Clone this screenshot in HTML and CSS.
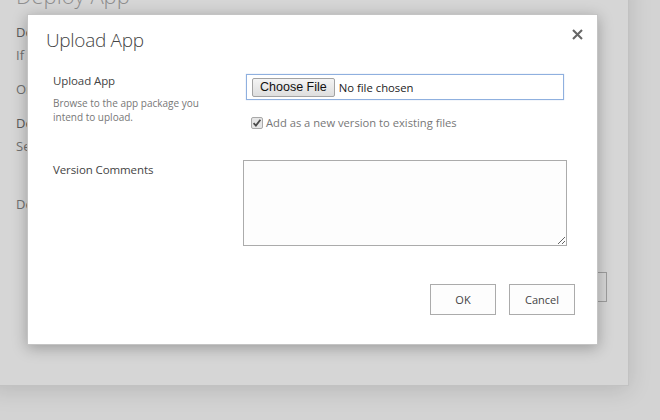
FILE: index.html
```html
<!DOCTYPE html>
<html>
<head>
<meta charset="utf-8">
<link rel="stylesheet" href="styles.css">
</head>
<body>
<div class="back-panel">
  <h1 class="back-title">Deploy App</h1>
  <p class="back-line strong">Deploy to site</p>
  <p class="back-line">If you want to deploy the app</p>
  <p class="back-line gap1">Or select an existing app</p>
  <p class="back-line strong gap2">Deployment package</p>
  <p class="back-line">Select a package file</p>
  <p class="back-line gap3">Deployment status</p>
  <div class="back-actions"><span class="back-btn"></span></div>
</div>

<div class="dialog" role="dialog" aria-label="Upload App">
  <div class="dialog-head">
    <h2 class="dialog-title">Upload App</h2>
    <button class="close" aria-label="Close">
      <svg width="11" height="11" viewBox="0 0 11 11"><path d="M1 1 L10 10 M10 1 L1 10" stroke="#666" stroke-width="2.1" fill="none"/></svg>
    </button>
  </div>
  <div class="form">
    <div class="label-col">
      <div class="label">Upload App</div>
      <div class="desc">Browse to the app package you intend to upload.</div>
    </div>
    <div class="field-col">
      <div class="file-box">
        <span class="choose">Choose File</span>
        <span class="no-file">No file chosen</span>
      </div>
      <div class="check-row">
        <span class="check">
          <svg width="12" height="12" viewBox="0 0 12 12"><rect x="0.5" y="0.5" width="11" height="11" rx="1.5" fill="#e6e6e6" stroke="#a9a9a9"/><path d="M2.6 6.2 L4.9 8.6 L9.4 2.8" stroke="#4a4a4a" stroke-width="1.8" fill="none"/></svg>
        </span>
        <span class="check-text">Add as a new version to existing files</span>
      </div>
    </div>
    <div class="label-col row2">
      <div class="label">Version Comments</div>
    </div>
    <div class="field-col row2">
      <textarea class="comments"></textarea>
    </div>
  </div>
  <div class="actions">
    <button class="btn">OK</button>
    <button class="btn">Cancel</button>
  </div>
</div>
</body>
</html>
```
FILE: styles.css
```css
html, body {
  margin: 0;
  padding: 0;
}
body {
  width: 660px;
  height: 420px;
  background: #d3d3d3;
  font-family: "Open Sans", "Noto Sans", sans-serif;
  overflow: hidden;
  position: relative;
}
.back-panel {
  position: absolute;
  left: -10px;
  top: -20px;
  width: 639px;
  height: 406px;
  background: #d6d6d6;
  border-right: 1px solid #c2c2c2;
  border-bottom: 1px solid #c2c2c2;
  box-shadow: 0 4px 22px rgba(0,0,0,0.13);
  box-sizing: border-box;
  padding: 0 0 0 26px;
}
.back-title {
  margin: 0;
  font-weight: 300;
  font-size: 22px;
  line-height: 30px;
  color: #8e8e8e;
}
.back-line {
  margin: 0;
  font-size: 13px;
  line-height: 23px;
  height: 23px;
  color: #6f6f6f;
  white-space: nowrap;
}
.back-line.strong { margin-top: 11px; color: #5a5a5a; }
.back-line.gap1 { margin-top: 11px; }
.back-line.gap2 { margin-top: 11px; }
.back-line.gap3 { margin-top: 35px; }
.back-actions {
  position: absolute;
  left: 0;
  right: 21px;
  top: 292px;
  display: flex;
  justify-content: flex-end;
}
.back-btn {
  width: 67px;
  height: 30px;
  border: 1px solid #9d9d9d;
  box-sizing: border-box;
}

.dialog {
  position: absolute;
  left: 27px;
  top: 14px;
  width: 571px;
  height: 331px;
  box-sizing: border-box;
  background: #fff;
  border: 1px solid #c4c4c4;
  box-shadow: 0 3px 14px rgba(0,0,0,0.28);
  padding: 0 22px 0 25px;
  display: flex;
  flex-direction: column;
}
.dialog-head {
  display: flex;
  justify-content: space-between;
  align-items: flex-start;
}
.dialog-title {
  margin: 11px 0 0 -7px;
  font-weight: 300;
  font-size: 19px;
  letter-spacing: -0.3px;
  line-height: 28px;
  color: #444;
}
.close {
  margin: 14px -8px 0 0;
  padding: 0;
  border: 0;
  background: none;
  width: 11px;
  height: 11px;
  display: block;
}
.close svg { display: block; }
.form {
  margin-top: 20px;
  display: grid;
  grid-template-columns: 190px 324px;
}
.label {
  font-size: 11.5px;
  letter-spacing: -0.1px;
  line-height: 16px;
  color: #444;
}
.label-col:first-child { margin-top: -1px; }
.desc {
  margin-top: 7px;
  width: 160px;
  font-size: 10px;
  line-height: 14px;
  color: #777;
}
.file-box {
  margin-left: 3px;
  width: 318px;
  height: 26px;
  box-sizing: border-box;
  border: 1px solid #8fb0df;
  box-shadow: 0 0 1px rgba(120,160,220,0.5);
  display: flex;
  align-items: center;
  padding-left: 5px;
  gap: 4px;
}
.choose {
  font-family: "Liberation Sans", Arial, sans-serif;
  font-size: 12.5px;
  color: #111;
  height: 19px;
  line-height: 17px;
  box-sizing: border-box;
  padding: 0 7px;
  border: 1px solid #a3a3a3;
  border-radius: 2px;
  background: linear-gradient(#f4f4f4, #dedede);
}
.no-file {
  font-size: 11.3px;
  color: #222;
}
.check-row {
  margin-top: 15px;
  margin-left: 8px;
  display: flex;
  align-items: center;
  gap: 3px;
}
.check svg { display: block; }
.check-text {
  font-size: 11.2px;
  line-height: 16px;
  color: #777;
}
.row2 { margin-top: 29px; }
.label-col.row2 { padding-top: 2px; }
.comments {
  display: block;
  width: 324px;
  height: 86px;
  box-sizing: border-box;
  margin: 0;
  border: 1px solid #ababab;
  background: #fdfdfd;
  border-radius: 0;
  font-family: inherit;
  outline: none;
}
.actions {
  margin-top: auto;
  margin-bottom: 29px;
  margin-right: 0;
  display: flex;
  justify-content: flex-end;
  gap: 13px;
}
.btn {
  width: 66px;
  height: 31px;
  box-sizing: border-box;
  border: 1px solid #ababab;
  background: #fdfdfd;
  font-family: inherit;
  font-size: 11px;
  color: #444;
  padding: 0;
  border-radius: 0;
}
```
